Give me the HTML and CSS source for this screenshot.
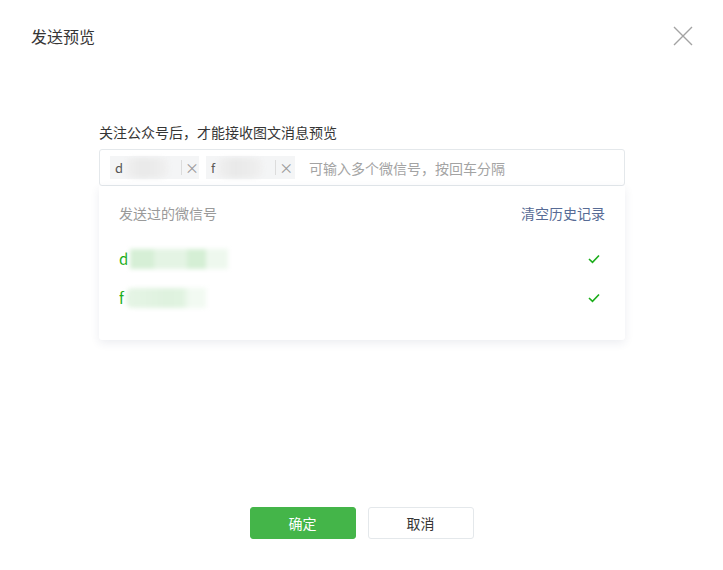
FILE: index.html
```html
<!DOCTYPE html>
<html lang="zh">
<head>
<meta charset="utf-8">
<link rel="stylesheet" href="styles.css">
</head>
<body>
<div class="dialog">
  <div class="header">
    <h3 class="title">发送预览</h3>
    <button class="close" aria-label="关闭">
      <svg width="20" height="20" viewBox="0 0 20 20"><path d="M1 1L19 19M19 1L1 19" stroke="#a3a3a3" stroke-width="1.4" fill="none"/></svg>
    </button>
  </div>
  <div class="body">
    <p class="label">关注公众号后，才能接收图文消息预览</p>
    <div class="input">
      <span class="tag"><span class="tag-text">d</span><span class="blur gray"></span><span class="sep"></span><span class="x">×</span></span>
      <span class="tag"><span class="tag-text">f</span><span class="blur gray"></span><span class="sep"></span><span class="x">×</span></span>
      <span class="placeholder">可输入多个微信号，按回车分隔</span>
    </div>
    <div class="dropdown">
      <div class="dd-head">
        <span class="dd-title">发送过的微信号</span>
        <a class="clear">清空历史记录</a>
      </div>
      <div class="row">
        <span class="name">d</span><span class="blur green w1"></span>
        <svg class="check" width="12" height="10" viewBox="0 0 12 10"><path d="M1 5L4.5 8.3L11 1.5" stroke="#1aad19" stroke-width="1.6" fill="none"/></svg>
      </div>
      <div class="row">
        <span class="name">f</span><span class="blur green w2"></span>
        <svg class="check" width="12" height="10" viewBox="0 0 12 10"><path d="M1 5L4.5 8.3L11 1.5" stroke="#1aad19" stroke-width="1.6" fill="none"/></svg>
      </div>
    </div>
  </div>
  <div class="footer">
    <button class="btn primary">确定</button>
    <button class="btn default">取消</button>
  </div>
</div>
</body>
</html>
```
FILE: styles.css
```css
html, body {
  margin: 0;
  padding: 0;
  background: #fff;
}
body {
  font-family: "Noto Sans CJK SC", "Liberation Sans", sans-serif;
  color: #353535;
  width: 723px;
  height: 570px;
  overflow: hidden;
}
.dialog {
  display: flex;
  flex-direction: column;
  height: 570px;
}
.header {
  display: flex;
  justify-content: space-between;
  align-items: center;
  padding: 24px 30px 0 31px;
  height: 24px;
}
.title {
  margin: 0;
  font-size: 16px;
  font-weight: normal;
  line-height: 24px;
  color: #353535;
}
.close {
  border: 0;
  background: none;
  padding: 0;
  width: 20px;
  height: 20px;
  margin-top: 0;
}
.close svg { display: block; }
.body {
  margin: 0 0 0 99px;
  width: 526px;
  padding-top: 76px;
  flex: 1;
}
.label {
  margin: 0 0 8px;
  font-size: 14px;
  line-height: 17px;
  color: #353535;
}
.input {
  height: 35px;
  border: 1px solid #e4e8eb;
  border-radius: 3px;
  display: flex;
  align-items: center;
  padding-left: 10px;
  box-sizing: content-box;
}
.tag {
  display: flex;
  align-items: center;
  width: 89px;
  height: 23px;
  background: #f4f5f6;
  margin-right: 7px;
  position: relative;
  box-sizing: border-box;
  padding-left: 5px;
}
.tag-text {
  font-size: 13px;
  color: #555;
  line-height: 23px;
}
.blur {
  display: inline-block;
  filter: blur(2px);
}
.blur.gray {
  width: 46px;
  height: 20px;
  margin-left: 2px;
  background: linear-gradient(90deg, #f0f0f0, #e9e9e9 40%, #ececec 70%, #f1f1f1);
  border-radius: 8px;
}
.sep {
  width: 1px;
  height: 15px;
  background: #dcdcdc;
  margin-left: 12px;
}
.x {
  font-size: 14px;
  color: #9a9a9a;
  margin-left: 3px;
  line-height: 23px;
}
.placeholder {
  font-size: 14px;
  color: #a3a3a3;
  margin-left: 7px;
}
.dropdown {
  background: #fff;
  box-shadow: 0 3px 10px rgba(40, 60, 100, 0.09);
  border-radius: 0 0 3px 3px;
  height: 154px;
  padding: 0 20px;
  box-sizing: border-box;
}
.dd-head {
  display: flex;
  justify-content: space-between;
  align-items: center;
  height: 20px;
  padding-top: 17px;
  font-size: 14px;
}
.dd-title { color: #9a9a9a; }
.clear { color: #576b95; cursor: pointer; }
.row {
  display: flex;
  align-items: center;
  height: 39px;
  font-size: 15px;
  color: #1aad19;
}
.dd-head + .row { margin-top: 16px; }
.name { line-height: 20px; }
.blur.green {
  height: 20px;
  margin-left: 2px;
}
.blur.w1 {
  width: 98px;
  background: linear-gradient(90deg, #d6efd6 0, #d6efd6 25%, #e4f4e4 25%, #e4f4e4 58%, #d5efd5 58%, #d5efd5 78%, #eef8ee 78%);
}
.blur.w2 {
  width: 80px;
  background: linear-gradient(90deg, #e6f5e6 0, #dff2df 50%, #e0f3e0 70%, #f2faf2 80%);
  border-radius: 6px 0 0 6px;
}
.check {
  margin-left: auto;
  margin-right: 5px;
}
.footer {
  display: flex;
  justify-content: center;
  gap: 12px;
  padding-bottom: 31px;
}
.btn {
  width: 106px;
  height: 32px;
  border-radius: 3px;
  font-family: inherit;
  font-size: 14px;
  cursor: pointer;
}
.btn.primary {
  background: #44b549;
  border: 1px solid #44b549;
  color: #fff;
}
.btn.default {
  background: #fff;
  border: 1px solid #e4e8eb;
  color: #353535;
}
```
